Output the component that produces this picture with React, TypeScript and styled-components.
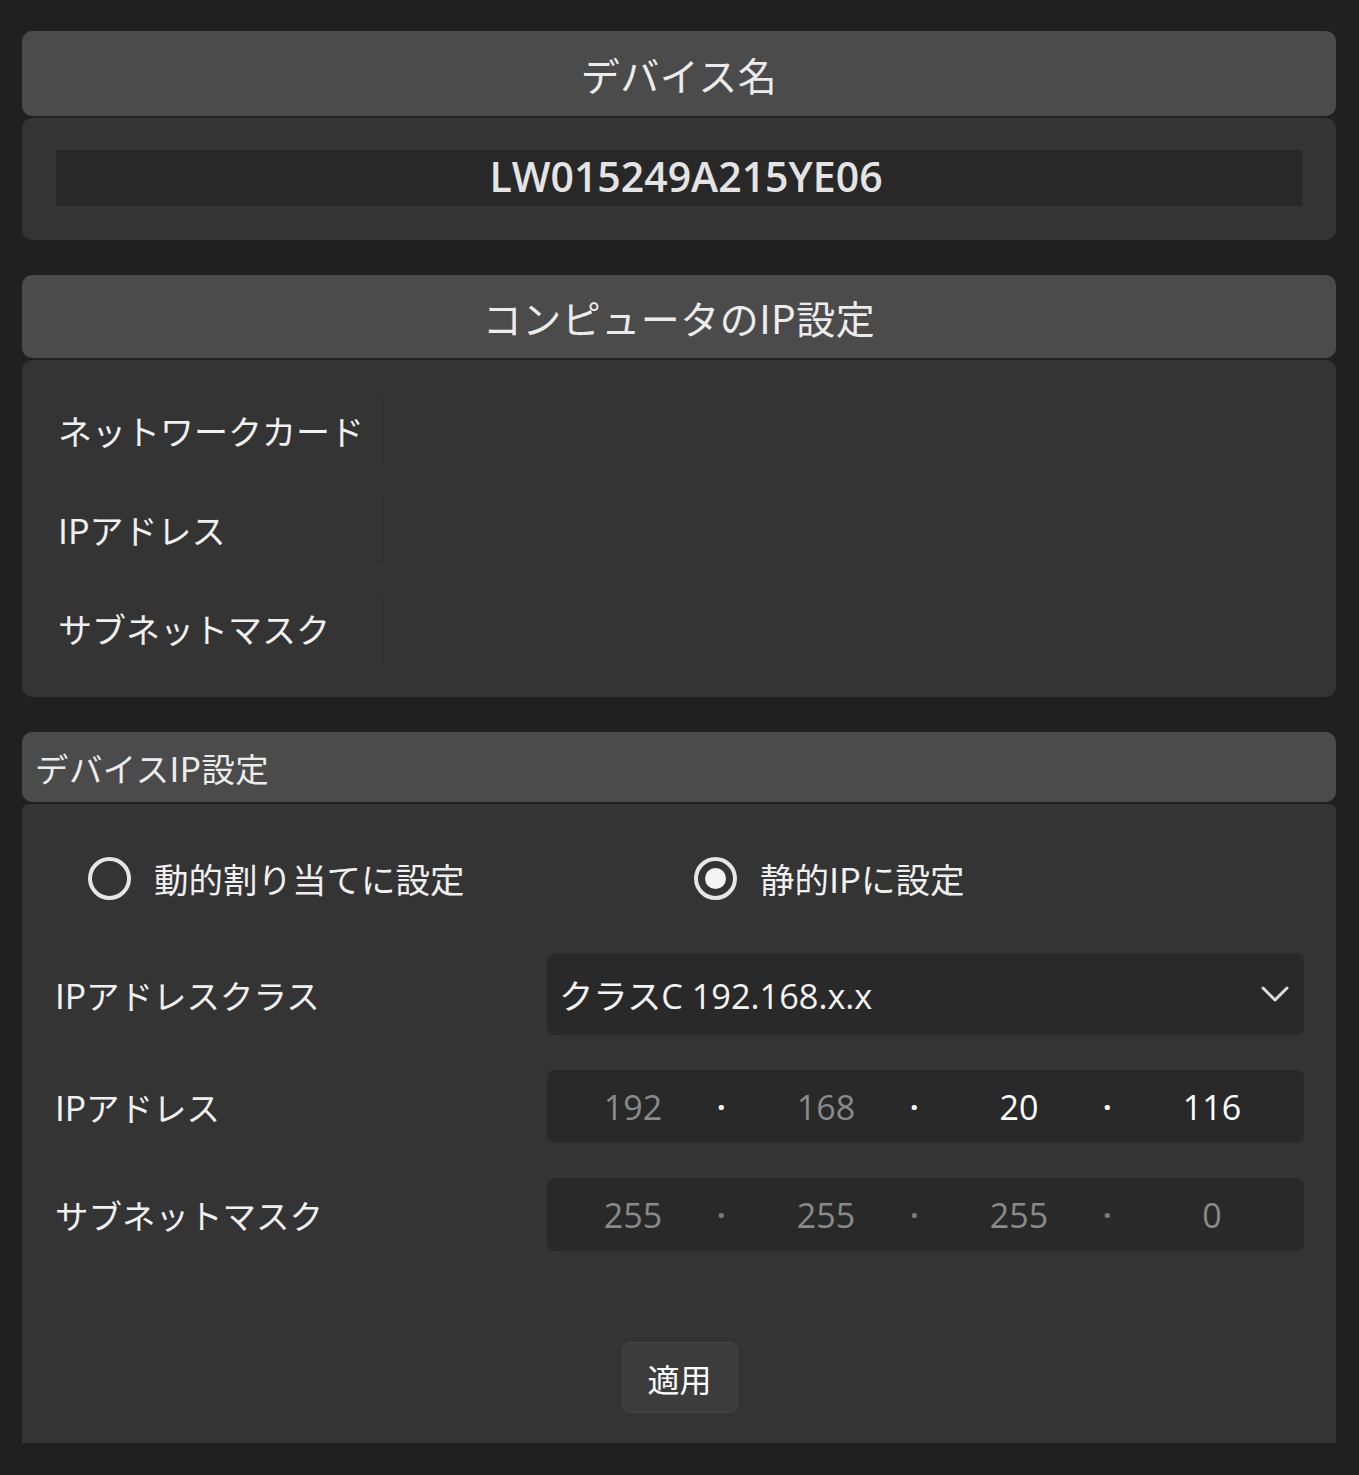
import React from 'react'
import styled, { createGlobalStyle } from 'styled-components'

const GlobalStyle = createGlobalStyle`
  html, body {
    margin: 0;
    padding: 0;
    background: #202020;
  }
  body {
    font-family: "Open Sans", "Noto Sans CJK JP", sans-serif;
    color: #f2f2f2;
  }
  * {
    box-sizing: border-box;
  }
`

const Page = styled.div`
  display: flex;
  flex-direction: column;
  gap: 35px;
  width: 1359px;
  height: 1475px;
  padding: 31px 23px 0 22px;
  background: #202020;
  overflow: hidden;
`

const Section = styled.section`
  display: flex;
  flex-direction: column;
  gap: 2px;
`

interface HeaderProps {
  h?: number
  align?: 'center' | 'left'
  size?: number
}

const SectionHeader = styled.div<HeaderProps>`
  display: flex;
  align-items: center;
  justify-content: ${({ align = 'center' }) => (align === 'center' ? 'center' : 'flex-start')};
  height: ${({ h = 85 }) => h}px;
  padding: 0 13px;
  background: #4b4b4b;
  border-radius: 10px;
  font-family: "Noto Sans CJK JP", sans-serif;
  font-size: ${({ size = 39 }) => size}px;
  color: #ececec;
  letter-spacing: 0.5px;
`

interface BodyProps {
  square?: boolean
}

const SectionBody = styled.div<BodyProps>`
  background: #343434;
  border-radius: ${({ square }) => (square ? '6px 6px 0 0' : '10px')};
`

const NameBody = styled(SectionBody)`
  padding: 32px 34px 34px 34px;
`

const NameField = styled.div`
  display: flex;
  align-items: center;
  justify-content: center;
  height: 56px;
  padding: 0 0 4px 14px;
  background: #282828;
  font-family: "Open Sans", sans-serif;
  font-weight: 600;
  font-size: 41px;
  color: #e4e4e4;
`

const InfoBody = styled(SectionBody)`
  padding: 21px 0 19px 0;
`

const InfoRow = styled.div`
  display: grid;
  grid-template-columns: 360px 1px 1fr;
  align-items: center;
  height: 99px;
`

const InfoLabel = styled.div`
  padding-left: 36px;
  font-family: "Noto Sans CJK JP", sans-serif;
  font-size: 34px;
  color: #f0f0f0;
`

const Divider = styled.div`
  width: 1px;
  height: 70px;
  background: #2c2c2c;
`

const DeviceBody = styled(SectionBody)`
  display: flex;
  flex-direction: column;
  height: 639px;
  padding: 49px 32px 30px 33px;
`

const RadioGroup = styled.div`
  display: grid;
  grid-template-columns: 606px 1fr;
  padding-left: 33px;
  margin-bottom: 50px;
`

const RadioOption = styled.label`
  display: flex;
  align-items: center;
  gap: 23px;
  font-family: "Noto Sans CJK JP", sans-serif;
  font-size: 34.5px;
  color: #f0f0f0;
`

interface RadioProps {
  checked?: boolean
}

const RadioCircle = styled.span<RadioProps>`
  display: flex;
  align-items: center;
  justify-content: center;
  width: 43px;
  height: 43px;
  border-radius: 50%;
  border: 4px solid #e6e6e6;
  &:after {
    content: "";
    display: ${({ checked }) => (checked ? 'block' : 'none')};
    width: 21px;
    height: 21px;
    border-radius: 50%;
    background: #f4f4f4;
  }
`

const FormRows = styled.div`
  display: flex;
  flex-direction: column;
  gap: 35px;
`

const FormRow = styled.div`
  display: grid;
  grid-template-columns: 492px 1fr;
  align-items: center;
`

const FormLabel = styled.div`
  font-family: "Noto Sans CJK JP", sans-serif;
  font-size: 33.5px;
  color: #f0f0f0;
`

const Select = styled.div`
  display: flex;
  align-items: center;
  justify-content: space-between;
  height: 82px;
  padding: 0 14px 0 12px;
  background: #292929;
  border-radius: 8px;
  font-size: 34.3px;
  color: #f4f4f4;
  svg {
    color: #dcdcdc;
  }
`

const IpBox = styled.div`
  display: flex;
  align-items: center;
  height: 73px;
  padding: 0 17px 0 11px;
  background: #292929;
  border-radius: 8px;
`

interface OctetProps {
  dim?: boolean
}

const Octet = styled.span<OctetProps>`
  width: 150px;
  text-align: center;
  font-size: 34px;
  color: ${({ dim }) => (dim ? '#8a8a8a' : '#ffffff')};
`

const Dot = styled.span<OctetProps>`
  width: 43px;
  padding-left: 9px;
  font-size: 30px;
  font-weight: 700;
  color: ${({ dim }) => (dim ? '#7a7a7a' : '#ffffff')};
`

const Footer = styled.div`
  display: flex;
  justify-content: center;
  margin-top: auto;
`

const ApplyButton = styled.button`
  width: 116px;
  height: 71px;
  background: #3c3c3c;
  border: 1px solid #464646;
  border-radius: 8px;
  font-family: "Noto Sans CJK JP", sans-serif;
  font-size: 32px;
  color: #ffffff;
  padding: 0;
`

const Chevron = () => (
  <svg width="30" height="18" viewBox="0 0 30 18" fill="none">
    <polyline points="3,3 15,15 27,3" stroke="currentColor" strokeWidth="3" strokeLinecap="round" strokeLinejoin="round" />
  </svg>
)

type IpProps = {
  values: string[]
  dimmed: boolean[]
  dimDots?: boolean
}

const IpField = ({ values, dimmed, dimDots }: IpProps) => (
  <IpBox>
    {values.map((v, i) => (
      <React.Fragment key={i}>
        <Octet dim={dimmed[i]}>{v}</Octet>
        {i < values.length - 1 && <Dot dim={dimDots}>·</Dot>}
      </React.Fragment>
    ))}
  </IpBox>
)

export default function App() {
  return (
    <>
      <GlobalStyle />
      <Page>
        <Section>
          <SectionHeader>デバイス名</SectionHeader>
          <NameBody>
            <NameField>LW015249A215YE06</NameField>
          </NameBody>
        </Section>

        <Section>
          <SectionHeader h={83}>コンピュータのIP設定</SectionHeader>
          <InfoBody>
            {['ネットワークカード', 'IPアドレス', 'サブネットマスク'].map((l) => (
              <InfoRow key={l}>
                <InfoLabel>{l}</InfoLabel>
                <Divider />
                <div />
              </InfoRow>
            ))}
          </InfoBody>
        </Section>

        <Section>
          <SectionHeader h={70} align="left" size={33.4}>デバイスIP設定</SectionHeader>
          <DeviceBody square>
            <RadioGroup>
              <RadioOption>
                <RadioCircle />
                動的割り当てに設定
              </RadioOption>
              <RadioOption>
                <RadioCircle checked />
                静的IPに設定
              </RadioOption>
            </RadioGroup>

            <FormRows>
              <FormRow>
                <FormLabel>IPアドレスクラス</FormLabel>
                <Select>
                  <span>クラスC 192.168.x.x</span>
                  <Chevron />
                </Select>
              </FormRow>
              <FormRow>
                <FormLabel>IPアドレス</FormLabel>
                <IpField values={['192', '168', '20', '116']} dimmed={[true, true, false, false]} />
              </FormRow>
              <FormRow>
                <FormLabel>サブネットマスク</FormLabel>
                <IpField values={['255', '255', '255', '0']} dimmed={[true, true, true, true]} dimDots />
              </FormRow>
            </FormRows>

            <Footer>
              <ApplyButton>適用</ApplyButton>
            </Footer>
          </DeviceBody>
        </Section>
      </Page>
    </>
  )
}
